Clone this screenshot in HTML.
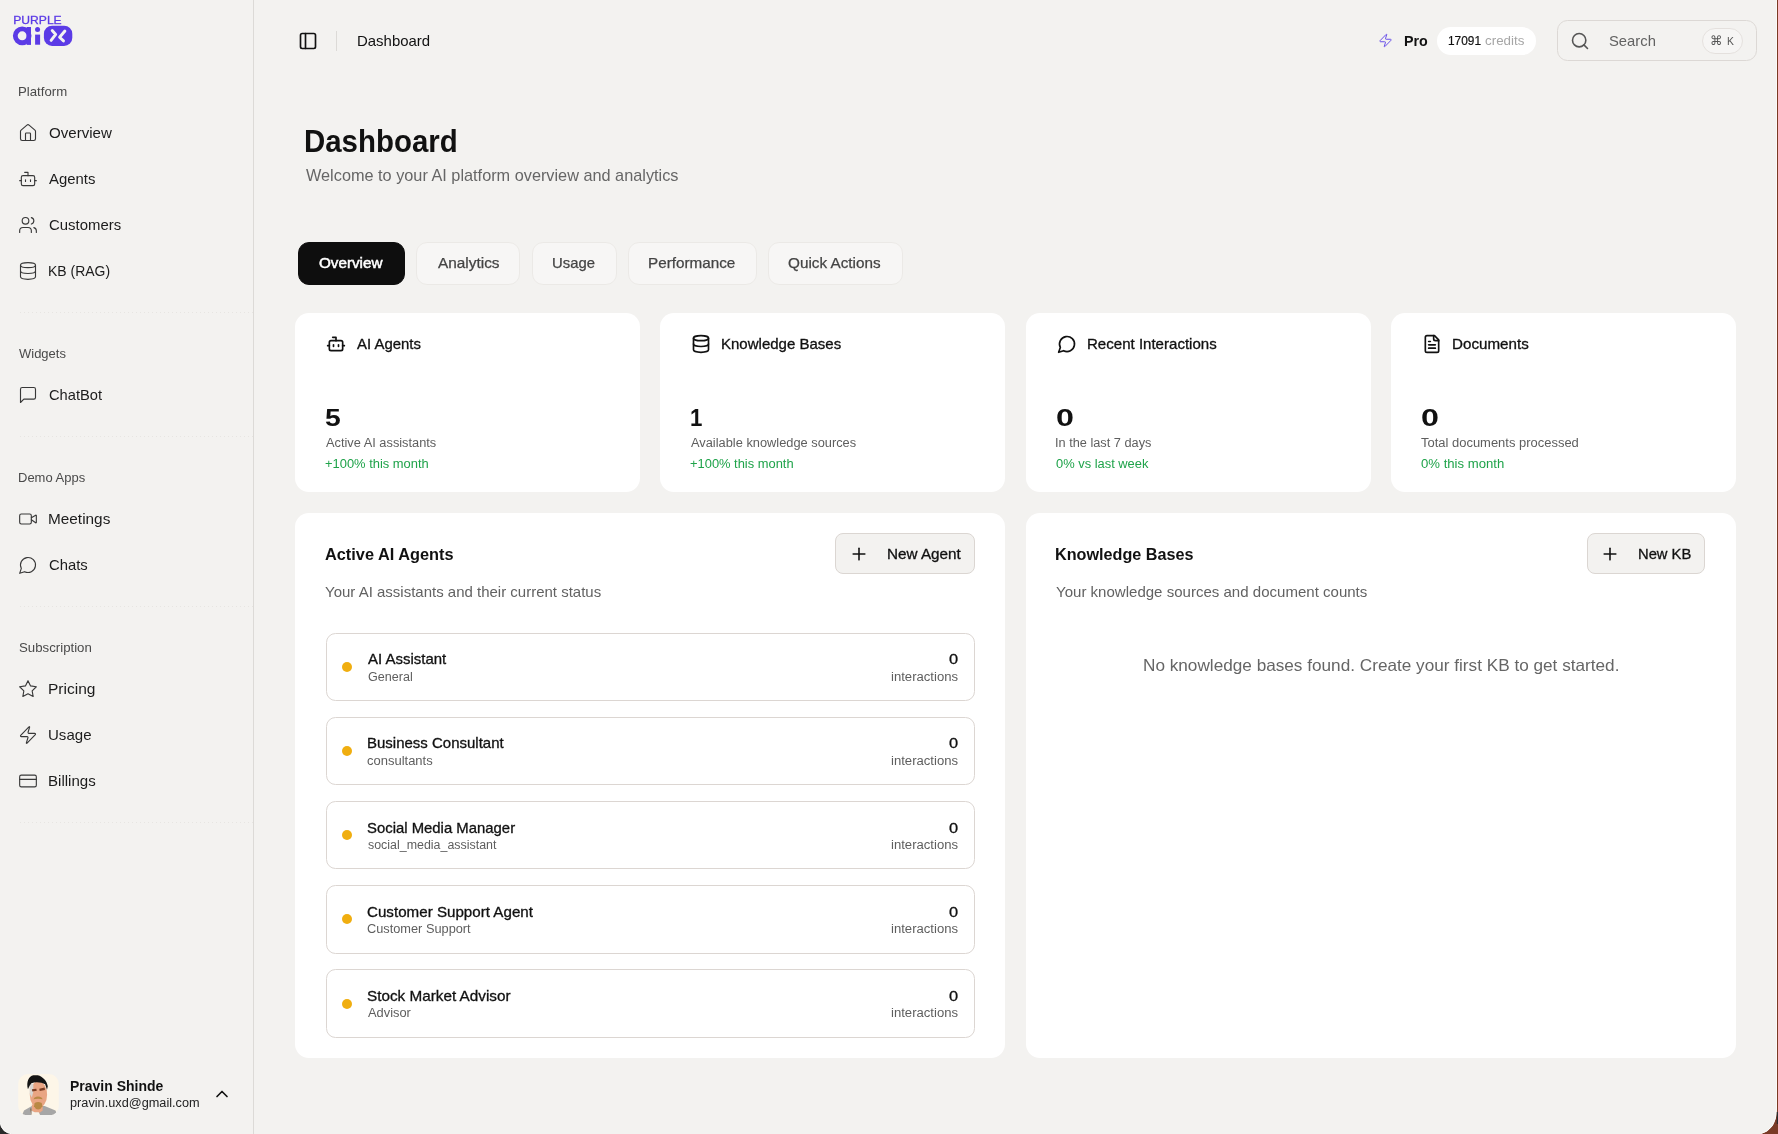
<!DOCTYPE html>
<html lang="en">
<head>
<meta charset="utf-8">
<title>Dashboard</title>
<style>
*{box-sizing:border-box;margin:0;padding:0}
html,body{width:1778px;height:1134px;overflow:hidden;background:#f3f2f0}
#app{position:absolute;left:0;top:0;width:1778px;height:1134px;will-change:transform}
body{position:relative;font-family:"Liberation Sans",sans-serif;color:#111}
.t{position:absolute;white-space:nowrap;line-height:20px;height:20px}
.ico{position:absolute;fill:none;stroke:#2a2a2a;stroke-width:1.5;stroke-linecap:round;stroke-linejoin:round;overflow:visible}
#sidebar{position:absolute;left:0;top:0;width:254px;height:1134px;border-right:1px solid #dcdad7}
.grp{font-size:13px;color:#4a4a4a}
.nav{font-size:14.3px;color:#1c1c1c}
.sep{position:absolute;left:20px;width:233px;height:1px;background:repeating-linear-gradient(90deg,#e7e5e2 0 1px,rgba(0,0,0,0) 1px 4px)}
.uname{font-size:14.3px;font-weight:700}
.umail{font-size:12.5px;color:#222}
.vsep{position:absolute;left:336px;top:31px;width:1px;height:20px;background:#dcdad7}
.crumb{font-size:14.3px;color:#111}
.pro{font-size:14.3px;font-weight:700}
.credits{position:absolute;left:1436.5px;top:27px;width:99.5px;height:28px;border-radius:14px;background:#fff}
.cr1{font-size:12.5px;-webkit-text-stroke:.2px #111}
.cr2{font-size:12.5px;color:#a6a6a6}
.search{position:absolute;left:1557px;top:20px;width:200px;height:40.500px;border:1px solid #dcd8d5;border-radius:10.5px}
.stxt{font-size:14.3px;color:#626262}
.kbd{position:absolute;left:1702px;top:28px;width:41px;height:26px;border:1px solid #e4e0dd;border-radius:13px;background:#f6f5f4}
.kt{font-size:10.8px;color:#555}
.kt1{font-size:12.5px;color:#555}
.h1{font-size:30.5px;font-weight:700;line-height:40px;height:40px}
.lead{font-size:16.6px;color:#666}
.card{position:absolute;background:#fff;border-radius:14px}
.ct{font-size:14.3px;-webkit-text-stroke:.3px #111}
.num{font-size:24.6px;font-weight:700;line-height:30px;height:30px}
.desc{font-size:12.5px;color:#5e5e5e}
.grn{font-size:12.5px;color:#1fa34a}
.h2{font-size:16.5px;font-weight:700}
.sub{font-size:14.3px;color:#626262}
.btn{position:absolute;background:#f3f2f0;border:1px solid #dbd6d2;border-radius:8px}
.bt{font-size:14.3px;-webkit-text-stroke:.3px #111}
.row{position:absolute;left:326px;width:649px;height:68.400px;border:1px solid #dcd6d2;border-radius:9.5px}
.dot{position:absolute;left:342px;width:10px;height:10px;border-radius:50%;background:#f0ae10}
.rn{font-size:14.3px;-webkit-text-stroke:.3px #111}
.rs{font-size:12.5px;color:#5e5e5e}
.rv{font-size:14.3px;-webkit-text-stroke:.3px #111}
.ri{font-size:12.5px;color:#5e5e5e}
.tab{position:absolute;top:242px;height:43px;border-radius:11px;background:#f7f6f5;border:1px solid #ebe9e6}
.tab.on{background:#0e0e0e;border-color:#0e0e0e}
.tabt{font-size:14.3px;color:#444;-webkit-text-stroke:.25px #444}
.tabt.on{color:#fff;-webkit-text-stroke:.5px #fff}
.empty{font-size:16.5px;color:#666}
.edge-l{position:absolute;left:1776px;top:0;width:1px;height:1134px;background:#fbfaf9}
.edge-r{position:absolute;left:1777px;top:0;width:1px;height:1134px;background:#7a3a22}
.corners{position:absolute;left:0;top:0;pointer-events:none}

</style>
</head>
<body>
<div id="app">
<aside aria-label="Sidebar">
<div id="sidebar"></div>
<svg class="logo" style="position:absolute;left:0;top:0" width="90" height="60" viewBox="0 0 90 60"><text x="13.3" y="23.5" font-family="Liberation Sans, sans-serif" font-size="11.4" fill="#5b3be6" stroke="#5b3be6" stroke-width=".32" textLength="48.4" lengthAdjust="spacingAndGlyphs">PURPLE</text><circle cx="22.2" cy="35.85" r="6.9" fill="none" stroke="#5b3be6" stroke-width="4.8"/><rect x="26.6" y="27" width="4.4" height="17.9" fill="#5b3be6"/><rect x="35.1" y="34.6" width="5" height="10.1" fill="#5b3be6"/><circle cx="37.55" cy="29.4" r="2.5" fill="#5b3be6"/><rect x="43.9" y="25.7" width="28.4" height="20.2" rx="8.2" fill="#5b3be6"/><path d="M52.2 30.6L55.7 34.4 51.1 40.4M64.9 31L59.6 37.3 63.5 40.9" fill="none" stroke="#f3f2f0" stroke-width="2.9" stroke-linecap="round" stroke-linejoin="round"/></svg>
<div id="t1" class="t grp" style="left:18.12px;top:81.5px;transform:scaleX(1.015);transform-origin:0 50%">Platform</div>
<svg class="ico" style="left:18.3px;top:122.5px;stroke-width:1.35;stroke:#383838" width="20" height="20" viewBox="0 0 24 24"><path d="M15 21v-8a1 1 0 0 0-1-1h-4a1 1 0 0 0-1 1v8"/><path d="M3 10a2 2 0 0 1 .709-1.528l7-5.999a2 2 0 0 1 2.582 0l7 5.999A2 2 0 0 1 21 10v9a2 2 0 0 1-2 2H5a2 2 0 0 1-2-2z"/></svg><div id="t2" class="t nav" style="left:48.91px;top:123px;transform:scaleX(1.056);transform-origin:0 50%">Overview</div>
<svg class="ico" style="left:18.3px;top:168.5px;stroke-width:1.35;stroke:#383838" width="20" height="20" viewBox="0 0 24 24"><path d="M12 8V4H8"/><rect width="16" height="12" x="4" y="8" rx="2"/><path d="M2 14h2"/><path d="M20 14h2"/><path d="M15 13v2"/><path d="M9 13v2"/></svg><div id="t3" class="t nav" style="left:49.44px;top:169px;transform:scaleX(1.042);transform-origin:0 50%">Agents</div>
<svg class="ico" style="left:18.3px;top:214.5px;stroke-width:1.35;stroke:#383838" width="20" height="20" viewBox="0 0 24 24"><path d="M16 21v-2a4 4 0 0 0-4-4H6a4 4 0 0 0-4 4v2"/><circle cx="9" cy="7" r="4"/><path d="M22 21v-2a4 4 0 0 0-3-3.87"/><path d="M16 3.13a4 4 0 0 1 0 7.75"/></svg><div id="t4" class="t nav" style="left:48.92px;top:215px;transform:scaleX(1.043);transform-origin:0 50%">Customers</div>
<svg class="ico" style="left:18.3px;top:260.5px;stroke-width:1.35;stroke:#383838" width="20" height="20" viewBox="0 0 24 24"><ellipse cx="12" cy="5" rx="9" ry="3"/><path d="M3 5V19A9 3 0 0 0 21 19V5"/><path d="M3 12A9 3 0 0 0 21 12"/></svg><div id="t5" class="t nav" style="left:48.47px;top:261px;transform:scaleX(0.977);transform-origin:0 50%">KB (RAG)</div>
<div id="t6" class="t grp" style="left:19.14px;top:343.5px;transform:scaleX(0.998);transform-origin:0 50%">Widgets</div>
<svg class="ico" style="left:18.3px;top:384.5px;stroke-width:1.35;stroke:#383838" width="20" height="20" viewBox="0 0 24 24"><path d="M21 15a2 2 0 0 1-2 2H7l-4 4V5a2 2 0 0 1 2-2h14a2 2 0 0 1 2 2z"/></svg><div id="t7" class="t nav" style="left:48.93px;top:385px;transform:scaleX(1.026);transform-origin:0 50%">ChatBot</div>
<div id="t8" class="t grp" style="left:18.14px;top:467.5px;transform:scaleX(0.999);transform-origin:0 50%">Demo Apps</div>
<svg class="ico" style="left:18.3px;top:508.5px;stroke-width:1.35;stroke:#383838" width="20" height="20" viewBox="0 0 24 24"><path d="m16 13 5.223 3.482a.5.5 0 0 0 .777-.416V7.87a.5.5 0 0 0-.752-.432L16 10.5"/><rect x="2" y="6" width="14" height="12" rx="2"/></svg><div id="t9" class="t nav" style="left:48.36px;top:509px;transform:scaleX(1.074);transform-origin:0 50%">Meetings</div>
<svg class="ico" style="left:18.3px;top:554.5px;stroke-width:1.35;stroke:#383838" width="20" height="20" viewBox="0 0 24 24"><path d="M7.9 20A9 9 0 1 0 4 16.1L2 22Z"/></svg><div id="t10" class="t nav" style="left:48.92px;top:555px;transform:scaleX(1.037);transform-origin:0 50%">Chats</div>
<div id="t11" class="t grp" style="left:18.63px;top:637.5px;transform:scaleX(1.018);transform-origin:0 50%">Subscription</div>
<svg class="ico" style="left:18.3px;top:678.5px;stroke-width:1.35;stroke:#383838" width="20" height="20" viewBox="0 0 24 24"><path d="M12 2l3.09 6.26L22 9.27l-5 4.87 1.18 6.88L12 17.77l-6.18 3.25L7 14.14 2 9.27l6.91-1.01L12 2z"/></svg><div id="t12" class="t nav" style="left:48.34px;top:679px;transform:scaleX(1.087);transform-origin:0 50%">Pricing</div>
<svg class="ico" style="left:18.3px;top:724.5px;stroke-width:1.35;stroke:#383838" width="20" height="20" viewBox="0 0 24 24"><path d="M4 14a1 1 0 0 1-.78-1.63l9.9-10.2a.5.5 0 0 1 .86.46l-1.92 6.02A1 1 0 0 0 13 10h7a1 1 0 0 1 .78 1.63l-9.9 10.2a.5.5 0 0 1-.86-.46l1.92-6.02A1 1 0 0 0 11 14z"/></svg><div id="t13" class="t nav" style="left:48.38px;top:725px;transform:scaleX(1.053);transform-origin:0 50%">Usage</div>
<svg class="ico" style="left:18.3px;top:770.5px;stroke-width:1.35;stroke:#383838" width="20" height="20" viewBox="0 0 24 24"><rect width="20" height="14" x="2" y="5" rx="2"/><path d="M2 10h20"/></svg><div id="t14" class="t nav" style="left:48.38px;top:771px;transform:scaleX(1.054);transform-origin:0 50%">Billings</div>
<div class="sep" style="top:312px"></div>
<div class="sep" style="top:436px"></div>
<div class="sep" style="top:606px"></div>
<div class="sep" style="top:822px"></div>
<svg style="position:absolute;left:17.8px;top:1073.6px" width="41" height="41.3" viewBox="0 0 41.5 42"><defs><clipPath id="av"><rect width="41.5" height="42" rx="10"/></clipPath></defs><g clip-path="url(#av)"><rect width="41.500" height="42" fill="#fdf6e8"/><path d="M4 42l2-5 8-4.500h13l11 4.500 2 5z" fill="#a6a6a6"/><path d="M14 31h11v6l-3 2.500h-5l-3-2z" fill="#e9a583"/><path d="M13.500 42v-4.500l3.500 1.500h4l1.500 3z" fill="#f8f3ea"/><path d="M12.200 35l1.300 7v-7z" fill="#8a6a4a"/><ellipse cx="20.700" cy="21" rx="8.800" ry="13.500" fill="#e9a583"/><path d="M11.700 10h3.800v8l-1.500 6-2.300-4z" fill="#d9d6d2"/><path d="M16.500 24.200q3.700-2.600 7.600 0l.900 1.600q-4.700-1.400-9.400 0z" fill="#b98945"/><path d="M16.800 29.500q3.500-1.800 7.200 0l.700 3.200q-1.600 3.300-4.300 3.500-2.700-.200-4.200-3.500z" fill="#b98945"/><path d="M14 15.500l4.500-.5.500 2-4.500.800zM21.500 15l5.500-1.200.300 2.400-5.300 1z" fill="#7c3e24"/><path d="M10 15.500C8 8 11 2 15.500 1.200h4.500C25 2.500 29.500 7 30.200 12.500l-.800 3.500-1.900-5.500C24 8.500 18 7.500 13.500 9.500l-1.800 2.500z" fill="#141414"/></g></svg>
<div id="t15" class="t uname" style="left:69.56px;top:1076px;transform:scaleX(0.978);transform-origin:0 50%">Pravin Shinde</div><div id="t16" class="t umail" style="left:69.53px;top:1092.6px;transform:scaleX(1.018);transform-origin:0 50%">pravin.uxd@gmail.com</div>
<svg class="ico" style="left:212.3px;top:1083.6px;stroke-width:2;stroke:#111" width="20" height="20" viewBox="0 0 24 24"><path d="m18 15-6-6-6 6"/></svg>
</aside>
<header>
<svg class="ico" style="left:298.2px;top:31.05px;stroke-width:2;stroke:#111" width="20" height="20" viewBox="0 0 24 24"><rect width="18" height="18" x="3" y="3" rx="2"/><path d="M9 3v18"/></svg><div class="vsep"></div><div id="t17" class="t crumb" style="left:356.89px;top:31px;transform:scaleX(1.046);transform-origin:0 50%">Dashboard</div>
<svg class="ico" style="left:1378.3px;top:33.2px;stroke-width:1.35;stroke:#4f33e6" width="15" height="15" viewBox="0 0 24 24"><path d="M4 14a1 1 0 0 1-.78-1.63l9.9-10.2a.5.5 0 0 1 .86.46l-1.92 6.02A1 1 0 0 0 13 10h7a1 1 0 0 1 .78 1.63l-9.9 10.2a.5.5 0 0 1-.86-.46l1.92-6.02A1 1 0 0 0 11 14z"/></svg><div id="t18" class="t pro" style="left:1403.50px;top:31px;transform:scaleX(0.998);transform-origin:0 50%">Pro</div><div class="credits"></div><div id="t19" class="t cr1" style="left:1448.08px;top:31px;transform:scaleX(0.949);transform-origin:0 50%">17091</div><div id="t20" class="t cr2" style="left:1485.32px;top:31px;transform:scaleX(1.069);transform-origin:0 50%">credits</div>
<div class="search"></div><svg class="ico" style="left:1570.2px;top:31.2px;stroke-width:1.9;stroke:#555" width="20" height="20" viewBox="0 0 24 24"><circle cx="11" cy="11" r="8"/><path d="m21 21-4.3-4.3"/></svg><div id="t21" class="t stxt" style="left:1608.72px;top:31px;transform:scaleX(1.035);transform-origin:0 50%">Search</div><div class="kbd"></div><div id="t22" class="t kt1" style="left:1710.41px;top:30.6px;transform:scaleX(0.958);transform-origin:0 50%">⌘</div><div id="t23" class="t kt" style="left:1726.92px;top:31.1px;transform:scaleX(0.960);transform-origin:0 50%">K</div>
</header>
<main>
<div id="t24" class="t h1" style="left:304.21px;top:121.4px;transform:scaleX(0.965);transform-origin:0 50%">Dashboard</div>
<div id="t25" class="t lead" style="left:305.64px;top:166.2px;transform:scaleX(0.981);transform-origin:0 50%">Welcome to your AI platform overview and analytics</div>
<div class="tab on" style="left:298px;width:107px"></div><div id="t26" class="t tabt on" style="left:319.47px;top:253px;transform:scaleX(1.065);transform-origin:0 50%">Overview</div><div class="tab" style="left:416.4px;width:104px"></div><div id="t27" class="t tabt" style="left:437.50px;top:253px;transform:scaleX(1.075);transform-origin:0 50%">Analytics</div><div class="tab" style="left:531.5px;width:85px"></div><div id="t28" class="t tabt" style="left:552.01px;top:253px;transform:scaleX(1.038);transform-origin:0 50%">Usage</div><div class="tab" style="left:627.5px;width:129px"></div><div id="t29" class="t tabt" style="left:647.78px;top:253px;transform:scaleX(1.066);transform-origin:0 50%">Performance</div><div class="tab" style="left:767.5px;width:135px"></div><div id="t30" class="t tabt" style="left:788.47px;top:253px;transform:scaleX(1.069);transform-origin:0 50%">Quick Actions</div>
<section aria-label="Stats">
<div class="card" style="left:295px;top:313px;width:345px;height:179px"></div><svg class="ico" style="left:326.4px;top:334px;stroke-width:2;stroke:#111" width="20" height="20" viewBox="0 0 24 24"><path d="M12 8V4H8"/><rect width="16" height="12" x="4" y="8" rx="2"/><path d="M2 14h2"/><path d="M20 14h2"/><path d="M15 13v2"/><path d="M9 13v2"/></svg><div id="t31" class="t ct" style="left:357.26px;top:334px;transform:scaleX(1.044);transform-origin:0 50%">AI Agents</div><div id="t32" class="t num" style="left:325.26px;top:403.4px;transform:scaleX(1.151);transform-origin:0 50%">5</div><div id="t33" class="t desc" style="left:325.85px;top:432.6px;transform:scaleX(1.024);transform-origin:0 50%">Active AI assistants</div><div id="t34" class="t grn" style="left:325.07px;top:453.6px;transform:scaleX(1.033);transform-origin:0 50%">+100% this month</div>
<div class="card" style="left:660px;top:313px;width:345px;height:179px"></div><svg class="ico" style="left:691.4px;top:334px;stroke-width:2;stroke:#111" width="20" height="20" viewBox="0 0 24 24"><ellipse cx="12" cy="5" rx="9" ry="3"/><path d="M3 5V19A9 3 0 0 0 21 19V5"/><path d="M3 12A9 3 0 0 0 21 12"/></svg><div id="t35" class="t ct" style="left:720.95px;top:334px;transform:scaleX(1.050);transform-origin:0 50%">Knowledge Bases</div><div id="t36" class="t num" style="left:689.79px;top:403.4px;transform:scaleX(0.904);transform-origin:0 50%">1</div><div id="t37" class="t desc" style="left:690.85px;top:432.6px;transform:scaleX(1.026);transform-origin:0 50%">Available knowledge sources</div><div id="t38" class="t grn" style="left:690.07px;top:453.6px;transform:scaleX(1.032);transform-origin:0 50%">+100% this month</div>
<div class="card" style="left:1025.8px;top:313px;width:345px;height:179px"></div><svg class="ico" style="left:1057.2px;top:334px;stroke-width:2;stroke:#111" width="20" height="20" viewBox="0 0 24 24"><path d="M7.9 20A9 9 0 1 0 4 16.1L2 22Z"/></svg><div id="t39" class="t ct" style="left:1086.80px;top:334px;transform:scaleX(1.053);transform-origin:0 50%">Recent Interactions</div><div id="t40" class="t num" style="left:1055.69px;top:403.4px;transform:scaleX(1.311);transform-origin:0 50%">0</div><div id="t41" class="t desc" style="left:1055.42px;top:432.6px;transform:scaleX(1.020);transform-origin:0 50%">In the last 7 days</div><div id="t42" class="t grn" style="left:1056.18px;top:453.6px;transform:scaleX(1.031);transform-origin:0 50%">0% vs last week</div>
<div class="card" style="left:1390.8px;top:313px;width:345px;height:179px"></div><svg class="ico" style="left:1422.2px;top:334px;stroke-width:2;stroke:#111" width="20" height="20" viewBox="0 0 24 24"><path d="M15 2H6a2 2 0 0 0-2 2v16a2 2 0 0 0 2 2h12a2 2 0 0 0 2-2V7Z"/><path d="M14 2v4a2 2 0 0 0 2 2h4"/><path d="M10 9H8"/><path d="M16 13H8"/><path d="M16 17H8"/></svg><div id="t43" class="t ct" style="left:1451.79px;top:334px;transform:scaleX(1.061);transform-origin:0 50%">Documents</div><div id="t44" class="t num" style="left:1420.69px;top:403.4px;transform:scaleX(1.311);transform-origin:0 50%">0</div><div id="t45" class="t desc" style="left:1421.44px;top:432.6px;transform:scaleX(1.037);transform-origin:0 50%">Total documents processed</div><div id="t46" class="t grn" style="left:1421.17px;top:453.6px;transform:scaleX(1.051);transform-origin:0 50%">0% this month</div>
</section>
<section aria-label="Active AI Agents">
<div class="card" style="left:295px;top:513px;width:710px;height:545px"></div>
<div id="t47" class="t h2" style="left:325.35px;top:544px;transform:scaleX(0.989);transform-origin:0 50%">Active AI Agents</div><div id="t48" class="t sub" style="left:325.32px;top:582px;transform:scaleX(1.049);transform-origin:0 50%">Your AI assistants and their current status</div>
<div class="btn" style="left:835px;top:533px;width:140px;height:41px"></div><svg class="ico" style="left:849.2px;top:544.1px;stroke-width:1.9;stroke:#111" width="20" height="20" viewBox="0 0 24 24"><path d="M5 12h14"/><path d="M12 5v14"/></svg><div id="t49" class="t bt" style="left:886.63px;top:544px;transform:scaleX(1.067);transform-origin:0 50%">New Agent</div>
<div class="row" style="top:632.6px"></div><div class="dot" style="top:661.8px"></div><div id="t50" class="t rn" style="left:368.26px;top:649.1px;transform:scaleX(1.047);transform-origin:0 50%">AI Assistant</div><div id="t51" class="t rs" style="left:367.50px;top:666.5px;transform:scaleX(1.006);transform-origin:0 50%">General</div><div id="t52" class="t rv" style="left:949.13px;top:649.1px;transform:scaleX(1.145);transform-origin:0 50%">0</div><div id="t53" class="t ri" style="left:890.85px;top:666.5px;transform:scaleX(1.049);transform-origin:0 50%">interactions</div>
<div class="row" style="top:716.8px"></div><div class="dot" style="top:746.0px"></div><div id="t54" class="t rn" style="left:366.95px;top:733.3px;transform:scaleX(1.049);transform-origin:0 50%">Business Consultant</div><div id="t55" class="t rs" style="left:367.48px;top:750.7px;transform:scaleX(1.039);transform-origin:0 50%">consultants</div><div id="t56" class="t rv" style="left:949.13px;top:733.3px;transform:scaleX(1.145);transform-origin:0 50%">0</div><div id="t57" class="t ri" style="left:890.85px;top:750.7px;transform:scaleX(1.049);transform-origin:0 50%">interactions</div>
<div class="row" style="top:801.0px"></div><div class="dot" style="top:830.2px"></div><div id="t58" class="t rn" style="left:367.48px;top:817.5px;transform:scaleX(1.041);transform-origin:0 50%">Social Media Manager</div><div id="t59" class="t rs" style="left:367.50px;top:834.9px;transform:scaleX(0.994);transform-origin:0 50%">social_media_assistant</div><div id="t60" class="t rv" style="left:949.13px;top:817.5px;transform:scaleX(1.145);transform-origin:0 50%">0</div><div id="t61" class="t ri" style="left:890.85px;top:834.9px;transform:scaleX(1.049);transform-origin:0 50%">interactions</div>
<div class="row" style="top:885.2px"></div><div class="dot" style="top:914.4px"></div><div id="t62" class="t rn" style="left:367.47px;top:901.7px;transform:scaleX(1.060);transform-origin:0 50%">Customer Support Agent</div><div id="t63" class="t rs" style="left:367.49px;top:919.1px;transform:scaleX(1.022);transform-origin:0 50%">Customer Support</div><div id="t64" class="t rv" style="left:949.13px;top:901.7px;transform:scaleX(1.145);transform-origin:0 50%">0</div><div id="t65" class="t ri" style="left:890.85px;top:919.1px;transform:scaleX(1.049);transform-origin:0 50%">interactions</div>
<div class="row" style="top:969.4px"></div><div class="dot" style="top:998.6px"></div><div id="t66" class="t rn" style="left:367.47px;top:985.9px;transform:scaleX(1.069);transform-origin:0 50%">Stock Market Advisor</div><div id="t67" class="t rs" style="left:368.00px;top:1003.3px;transform:scaleX(1.029);transform-origin:0 50%">Advisor</div><div id="t68" class="t rv" style="left:949.13px;top:985.9px;transform:scaleX(1.145);transform-origin:0 50%">0</div><div id="t69" class="t ri" style="left:890.85px;top:1003.3px;transform:scaleX(1.049);transform-origin:0 50%">interactions</div>
</section>
<section aria-label="Knowledge Bases">
<div class="card" style="left:1026px;top:513px;width:710px;height:545px"></div>
<div id="t70" class="t h2" style="left:1055.47px;top:544px;transform:scaleX(0.981);transform-origin:0 50%">Knowledge Bases</div><div id="t71" class="t sub" style="left:1056.17px;top:582px;transform:scaleX(1.052);transform-origin:0 50%">Your knowledge sources and document counts</div>
<div class="btn" style="left:1587px;top:533px;width:118px;height:41px"></div><svg class="ico" style="left:1599.7px;top:544.1px;stroke-width:1.9;stroke:#111" width="20" height="20" viewBox="0 0 24 24"><path d="M5 12h14"/><path d="M12 5v14"/></svg><div id="t72" class="t bt" style="left:1638.10px;top:544px;transform:scaleX(1.032);transform-origin:0 50%">New KB</div>
<div id="t73" class="t empty" style="left:1142.70px;top:655px;transform:scaleX(1.041);transform-origin:0 50%">No knowledge bases found. Create your first KB to get started.</div>
</section>
</main>
<div class="edge-l"></div><div class="edge-r"></div><svg class="corners" width="1778" height="1134" viewBox="0 0 1778 1134"><path d="M1778 1108V1134H1760Q1777 1130 1777 1108Z" fill="#7a3a26"/><path d="M1760 1134Q1776.500 1130 1776.500 1108" fill="none" stroke="#fbfaf9" stroke-width="1"/><path d="M1777.500 1112v12" stroke="#2b2b2b" stroke-width="1.500"/><path d="M0 1122V1134H12.500Q1 1133 0 1122Z" fill="#2a2a2a"/><path d="M12.500 1134Q1.500 1132.500 0 1122" fill="none" stroke="#fbfaf9" stroke-width="1"/></svg>
</div>
</body>
</html>
